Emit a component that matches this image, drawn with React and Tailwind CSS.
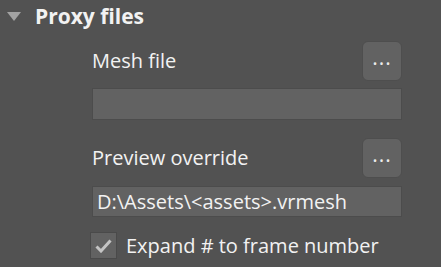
import React from 'react';

const FONT = { fontFamily: '"Open Sans", "Noto Sans", sans-serif' };

const BrowseButton = () => (
  <button className="w-[40px] h-[40px] rounded-[6px] bg-[#626262] border border-[#4e4e4e] text-[#ececec] text-[21px] leading-none flex items-center justify-center pb-[8px] tracking-[1px]">
    ...
  </button>
);

const App = () => {
  return (
    <div className="w-[441px] h-[267px] bg-[#525252] text-[#f2f2f2] overflow-hidden" style={FONT}>
      {/* Header */}
      <div className="flex items-center h-[33px] pl-[7px]">
        <svg width="14" height="9" viewBox="0 0 14 9" className="mr-[14px]">
          <polygon points="0,0 14,0 7,9" fill="#a3a3a3" />
        </svg>
        <span className="text-[21px] font-bold leading-none">Proxy files</span>
      </div>

      <div className="pl-[92px] pr-[39px] flex flex-col">
        {/* Mesh file */}
        <div className="flex items-center justify-between mt-[8px]">
          <span className="text-[20px] leading-none">Mesh file</span>
          <BrowseButton />
        </div>
        <div className="mt-[7px] h-[32px] bg-[#626262] border border-[#4c4c4c]" />

        {/* Preview override */}
        <div className="flex items-center justify-between mt-[18px]">
          <span className="text-[20px] leading-none">Preview override</span>
          <BrowseButton />
        </div>
        <div className="mt-[8px] h-[31px] bg-[#626262] border border-[#4c4c4c] flex items-center px-[4px]">
          <span className="text-[20px] leading-none">D:\Assets\&lt;assets&gt;.vrmesh</span>
        </div>

        {/* Checkbox */}
        <div className="flex items-center mt-[15px] -ml-[2px]">
          <div className="w-[27px] h-[27px] bg-[#626262] border border-[#4a4a4a] flex items-center justify-center">
            <svg width="17" height="14" viewBox="0 0 17 14">
              <path d="M1.5 7.5 L6 12 L15.5 1.5" fill="none" stroke="#c4c4c4" strokeWidth="3" />
            </svg>
          </div>
          <span className="ml-[9px] text-[20px] leading-none">Expand # to frame number</span>
        </div>
      </div>
    </div>
  );
};

export default App;
